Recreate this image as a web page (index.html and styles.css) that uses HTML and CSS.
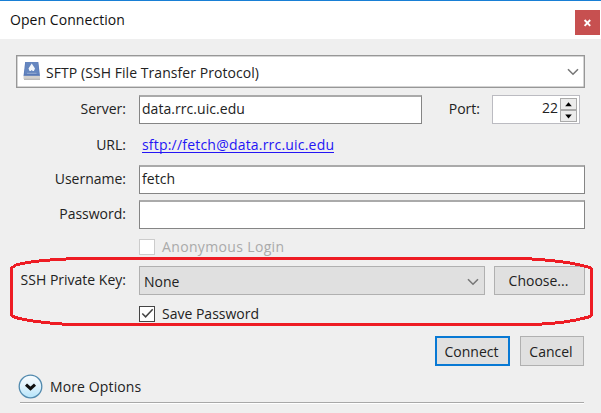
FILE: index.html
```html
<!DOCTYPE html>
<html lang="en">
<head>
<meta charset="utf-8">
<title>Open Connection</title>
<link rel="stylesheet" href="styles.css">
</head>
<body>
<main class="dialog">
  <header class="titlebar">
    <h1 class="title"><span>Open Connection</span></h1>
    <button class="close" aria-label="Close"><svg width="9" height="8" viewBox="0 0 9 8"><path d="M1.6 1 7.2 6.8M7.2 1 1.6 6.8" stroke="#fff" stroke-width="1.9"/></svg></button>
  </header>
  <form class="form">
    <div class="protocol">
      <svg class="drive" width="18" height="20" viewBox="0 0 18 20">
        <path d="M2.2 1H15.3L17 15H.5Z" fill="#5879b8"/>
        <path d="M2.7 1H14.8L16 13H1.5Z" fill="#6586bf"/>
        <path d="M.5 14.8H17V18H.5Z" fill="#d2d0cd"/>
        <path d="M1 18.3H17" stroke="#aaa9a8"/>
        <path d="M8.7 2.5 12 7.4 10.9 10H9.7L8.7 8.9 7.7 10H6.5L5.5 7.4Z" fill="#f3f7fb"/>
        <path d="M4 12.3H13.5" stroke="#94abd2"/>
      </svg>
      <span class="protocol-text">SFTP (SSH File Transfer Protocol)</span>
      <svg class="chevron" width="12" height="8" viewBox="0 0 12 8"><path d="M1 1.2 6 6.2 11 1.2"/></svg>
    </div>
    <div class="row server-row">
      <label class="label"><span>Server:</span></label>
      <div class="field server-field"><span>data.rrc.uic.edu</span></div>
      <label class="port-label"><span>Port:</span></label>
      <div class="spinner"><span class="number">22</span>
        <div class="steps">
          <button type="button" class="step" aria-label="Increase"><svg width="7" height="5" viewBox="0 0 7 5"><path d="M3.5.3 6.8 4.3H.2Z"/></svg></button>
          <button type="button" class="step" aria-label="Decrease"><svg width="7" height="5" viewBox="0 0 7 5"><path d="M.2.5H6.8L3.5 4.5Z"/></svg></button>
        </div>
      </div>
    </div>
    <div class="row url-row">
      <span class="label"><span>URL:</span></span>
      <a class="url"><span>sftp://fetch@data.rrc.uic.edu</span></a>
    </div>
    <div class="row user-row">
      <label class="label"><span>Username:</span></label>
      <div class="field"><span>fetch</span></div>
    </div>
    <div class="row password-row">
      <label class="label"><span>Password:</span></label>
      <div class="field"></div>
    </div>
    <div class="check-row anonymous-row">
      <span class="box"></span><span>Anonymous Login</span>
    </div>
    <div class="row key-row">
      <label class="label"><span>SSH Private Key:</span></label>
      <div class="key-select"><span>None</span><svg class="chevron" width="12" height="8" viewBox="0 0 12 8"><path d="M1 1.2 6 6.2 11 1.2"/></svg></div>
      <button type="button" class="button choose"><span>Choose...</span></button>
    </div>
    <div class="check-row save-row">
      <span class="box checked"><svg width="13" height="13" viewBox="0 0 13 13"><path d="M1.3 6.5 4.6 9.8 11.7 2.3" fill="none" stroke="#444" stroke-width="1.5"/></svg></span><span>Save Password</span>
    </div>
    <div class="actions">
      <button type="button" class="button connect"><span>Connect</span></button>
      <button type="button" class="button cancel"><span>Cancel</span></button>
    </div>
    <div class="more-row">
      <svg class="disclosure" width="26" height="26" viewBox="0 0 26 26">
        <defs><linearGradient id="glass" x2="0" y2="1"><stop stop-color="#fafdff"/><stop offset=".45" stop-color="#e2f3fc"/><stop offset="1" stop-color="#b5e4fa"/></linearGradient></defs>
        <circle cx="12.5" cy="12.5" r="11.3" fill="url(#glass)" stroke="#528aae" stroke-width="1.3"/>
        <path d="M8 10.6 12.5 14.7 17 10.6" fill="none" stroke="#111" stroke-width="3"/>
      </svg>
      <span class="more">More Options</span>
    </div>
    <hr class="rule">
  </form>
  <svg class="outline" width="601" height="413" viewBox="0 0 601 413"><path d="M78 258.500H523Q562 260.500 582 265.500L590 267.500 591.500 269V315L589 317Q565 323.500 533 324.500H69Q30 322 14 317L11.500 315V268L16 265Q34 260 78 258.500Z"/></svg>
</main>
</body>
</html>
```

FILE: styles.css
```css
* { box-sizing: border-box; }
body { margin: 0; width: 601px; height: 413px; overflow: hidden; background: #efefef; font: 14px/20px "Open Sans", "Noto Sans", sans-serif; color: #222; }
button { font: inherit; color: inherit; padding: 0; border: 0; }
span { white-space: nowrap; }
.dialog { position: relative; height: 413px; }
.titlebar { height: 39px; border-top: 1px solid #187fd5; background: #fff; display: flex; justify-content: space-between; padding: 0 1px 0 10px; }
.title { margin: 9px 0 0; font-size: 14px; line-height: 20px; font-weight: 400; letter-spacing: .06px; color: #111; }
.close { width: 25px; height: 25px; margin-top: 9px; background: #c75050; display: grid; place-items: center; }
.form { padding: 16px 16px 0; }
.protocol { height: 33px; width: 569px; border: 1px solid #979797; box-shadow: inset 0 0 0 .5px #aaa; background: #fff; display: flex; align-items: center; padding: 0 5px 0 6px; }
.drive { margin-top: -1px; }
.protocol-text { margin: 2px 0 0 5px; letter-spacing: .06px; }
.chevron { margin-left: auto; fill: none; stroke: #777; stroke-width: 1.6; }
.row { display: flex; height: 29px; width: 569px; align-items: center; }
.label { width: 110px; margin-right: 13px; text-align: right; flex: none; display: block; margin-top: -1px; }
.field { flex: 1; height: 29px; background: #fff; border: 1px solid #858585; border-top: 2px solid #aaa; padding: 2px; letter-spacing: .05px; }
.server-row { margin-top: 7px; }
.server-field { flex: none; width: 283px; }
.port-label { width: 58px; text-align: right; margin-top: -1px; }
.spinner { margin-left: 12px; width: 88px; height: 29px; background: #fff; border: 1px solid #bbbbc1; padding: 1px 2px; display: flex; justify-content: flex-end; gap: 2px; }
.number { padding-top: 1px; }
.steps { width: 17px; padding-top: 1px; }
.step { width: 17px; height: 12px; background: #ececec; border: 1px solid #aaa; display: grid; place-items: center; }
.url-row { margin-top: 7px; }
.url { color: #2415f5; border-bottom: 1px solid #2415f5; line-height: 17px; height: 17px; margin: -2px 0 0 3px; letter-spacing: .2px; }
.user-row { margin-top: 5px; }
.password-row { margin-top: 6px; }
.check-row { display: flex; align-items: center; height: 17px; padding-left: 123px; gap: 7px; }
.anonymous-row { margin-top: 9px; color: #aaa; letter-spacing: .35px; }
.box { width: 16px; height: 16px; border: 1px solid #ccc; background: #fff; display: grid; place-items: center; }
.checked { border-color: #444; }
.key-row { margin-top: 11px; }
.key-select { width: 346px; height: 29px; border: 1px solid #b0b0b0; background: #e0e0e0; display: flex; align-items: center; padding: 2px 5px 0 4px; }
.button { background: #e0e0e0; border: 1px solid #b0b0b0; }
.choose { width: 91px; height: 29px; margin-left: 9px; padding: 1px 2px 0 0; }
.save-row { margin-top: 10px; }
.actions { margin-top: 14px; display: flex; width: 568px; justify-content: flex-end; gap: 10px; }
.connect { width: 75px; height: 30px; border: 2px solid #0879d4; padding: 1px 2px 0 0; }
.cancel { width: 64px; height: 30px; padding: 1px 2px 0 0; }
.more-row { margin: 8px 0 0 2px; height: 26px; display: flex; align-items: center; gap: 6px; }
.more { letter-spacing: .12px; }
.rule { margin: 2px 0 0 4px; width: 564px; border: 0; border-top: 1px solid #a8a8a8; box-shadow: 0 1px #fff; }
.outline { position: absolute; inset: 0; pointer-events: none; fill: none; stroke: #ee1c24; stroke-width: 3; shape-rendering: crispEdges; }
```
